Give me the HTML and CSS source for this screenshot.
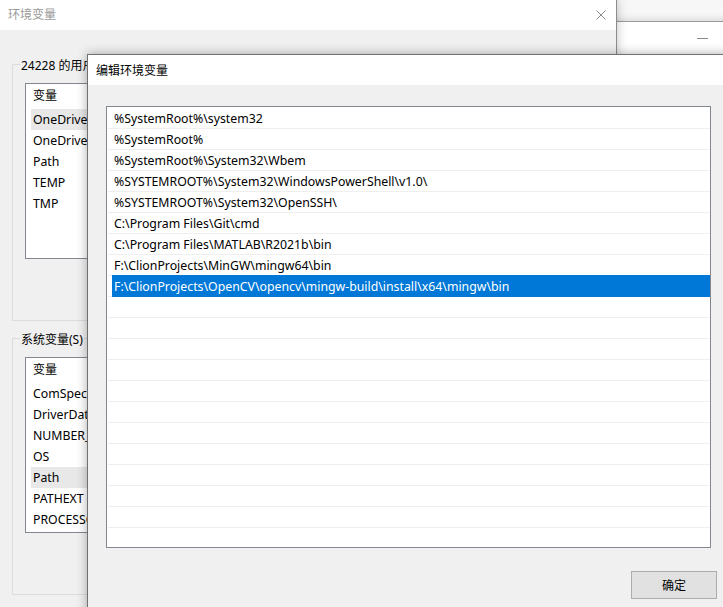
FILE: index.html
```html
<!DOCTYPE html>
<html lang="zh-CN">
<head>
    <meta charset="UTF-8">
    <title>编辑环境变量</title>
    <link rel="stylesheet" href="styles.css">
</head>
<body>
    <div class="desk">
        <!-- window far behind, only its title bar shows -->
        <div class="win far">
            <div class="titlebar">
                <span class="min"></span>
            </div>
        </div>

        <!-- 环境变量 -->
        <div class="win back">
            <div class="titlebar">
                <span class="title">环境变量</span>
                <svg class="close" width="10" height="10" viewBox="0 0 10 10">
                    <path d="M0.5 0.5 L9.5 9.5 M9.5 0.5 L0.5 9.5" stroke="#8a8a8a" stroke-width="1" fill="none"/>
                </svg>
            </div>
            <div class="win-body">
                <fieldset class="group">
                    <legend>24228 的用户变量(U)</legend>
                    <div class="varlist">
                        <div class="varhead">变量</div>
                        <div class="varrow sel">OneDrive</div>
                        <div class="varrow">OneDrive</div>
                        <div class="varrow">Path</div>
                        <div class="varrow">TEMP</div>
                        <div class="varrow">TMP</div>
                    </div>
                </fieldset>
                <fieldset class="group">
                    <legend>系统变量(S)</legend>
                    <div class="varlist">
                        <div class="varhead">变量</div>
                        <div class="varrow">ComSpec</div>
                        <div class="varrow">DriverData</div>
                        <div class="varrow">NUMBER_OF_PROCESSORS</div>
                        <div class="varrow">OS</div>
                        <div class="varrow sel">Path</div>
                        <div class="varrow">PATHEXT</div>
                        <div class="varrow">PROCESSOR_ARCHITECTURE</div>
                    </div>
                </fieldset>
            </div>
        </div>

        <!-- 编辑环境变量 -->
        <div class="win dialog">
            <div class="titlebar">
                <span class="title dark">编辑环境变量</span>
            </div>
            <div class="dialog-body">
                <div class="pathlist">
                    <div class="item"><span class="cell">%SystemRoot%\system32</span></div>
                    <div class="item"><span class="cell">%SystemRoot%</span></div>
                    <div class="item"><span class="cell">%SystemRoot%\System32\Wbem</span></div>
                    <div class="item"><span class="cell">%SYSTEMROOT%\System32\WindowsPowerShell\v1.0\</span></div>
                    <div class="item"><span class="cell">%SYSTEMROOT%\System32\OpenSSH\</span></div>
                    <div class="item"><span class="cell">C:\Program Files\Git\cmd</span></div>
                    <div class="item"><span class="cell">C:\Program Files\MATLAB\R2021b\bin</span></div>
                    <div class="item"><span class="cell">F:\ClionProjects\MinGW\mingw64\bin</span></div>
                    <div class="item selected"><span class="cell">F:\ClionProjects\OpenCV\opencv\mingw-build\install\x64\mingw\bin</span></div>
                    <div class="item"><span class="cell"></span></div>
                    <div class="item"><span class="cell"></span></div>
                    <div class="item"><span class="cell"></span></div>
                    <div class="item"><span class="cell"></span></div>
                    <div class="item"><span class="cell"></span></div>
                    <div class="item"><span class="cell"></span></div>
                    <div class="item"><span class="cell"></span></div>
                    <div class="item"><span class="cell"></span></div>
                    <div class="item"><span class="cell"></span></div>
                    <div class="item"><span class="cell"></span></div>
                    <div class="item"><span class="cell"></span></div>
                    <div class="item"><span class="cell"></span></div>
                </div>
                <div class="actions">
                    <button class="btn">确定</button>
                </div>
            </div>
        </div>
    </div>
</body>
</html>
```

FILE: styles.css
```css
html, body {
    margin: 0;
    padding: 0;
}
body {
    font-family: "Noto Sans", "Noto Sans CJK SC", sans-serif;
    font-size: 12px;
    color: #000;
    background: #f7f7f7;
}
.desk {
    position: relative;
    width: 723px;
    height: 607px;
    overflow: hidden;
}
.win {
    position: absolute;
    box-sizing: border-box;
    background: #f0f0f0;
}
.titlebar {
    height: 30px;
    background: #fff;
    display: flex;
    align-items: center;
    box-sizing: border-box;
}
.title {
    color: #9a9a9a;
    line-height: 16px;
}
.title.dark {
    color: #000;
    padding-top: 1px;
}

/* far window */
.far {
    left: 560px;
    top: 21px;
    width: 190px;
    height: 200px;
    border-top: 1px solid #9c9c9c;
    box-shadow: 0 0 9px rgba(0,0,0,0.18);
    z-index: 1;
}
.far .titlebar {
    height: 33px;
    justify-content: flex-end;
    padding-right: 42px;
}
.min {
    width: 11px;
    height: 1px;
    background: #8a8a8a;
}

/* 环境变量 window */
.back {
    left: -1px;
    top: -1px;
    width: 618px;
    height: 620px;
    border: 1px solid #8c8c8c;
    box-shadow: 0 0 10px rgba(0,0,0,0.25);
    z-index: 2;
}
.back .titlebar {
    padding: 0 0 0 8px;
    justify-content: space-between;
}
.back .close {
    margin-right: 10px;
}
.win-body {
    padding: 26px 0 0 12px;
}
.group {
    margin: 0 0 9px 0;
    padding: 0 20px 61px 12px;
    border: 1px solid #dcdcdc;
    width: 560px;
}
.group legend {
    margin-left: -5px;
    padding: 0 1px;
    line-height: 20px;
    height: 16px;
}
.varlist {
    margin-top: 11px;
    height: 176px;
    box-sizing: border-box;
    background: #fff;
    border: 1px solid #828790;
    overflow: hidden;
}
.varhead {
    height: 25px;
    line-height: 24px;
    padding-left: 7px;
}
.varrow {
    height: 21px;
    line-height: 21px;
    margin-left: 5px;
    padding-left: 2px;
    white-space: nowrap;
    font-size: 12.3px;
}
.varrow.sel {
    background: #e8e8e8;
}

/* 编辑环境变量 dialog */
.dialog {
    left: 87px;
    top: 54px;
    width: 650px;
    height: 600px;
    border-left: 1px solid #707070;
    border-top: 1px solid #707070;
    box-shadow: 0 0 10px rgba(0,0,0,0.32);
    z-index: 3;
}
.dialog .titlebar {
    padding-left: 8px;
}
.dialog-body {
    padding: 21px 0 0 18px;
}
.pathlist {
    width: 605px;
    height: 442px;
    box-sizing: border-box;
    background: #fff;
    border: 1px solid #828790;
    padding: 1px 0 0 1px;
    overflow: hidden;
}
.item {
    display: flex;
    height: 20px;
    border-bottom: 1px solid #efefef;
}
.cell {
    flex: 1;
    margin-left: 4px;
    padding-left: 2px;
    line-height: 22px;
    font-size: 12.3px;
    white-space: nowrap;
}
.item.selected .cell {
    background: #0078d7;
    color: #fff;
    box-shadow: 0 -1px 0 #0078d7, 0 1px 0 #0078d7;
}
.actions {
    width: 611px;
    display: flex;
    justify-content: flex-end;
    margin-top: 23px;
}
.btn {
    width: 86px;
    height: 28px;
    background: #e1e1e1;
    border: 1px solid #adadad;
    font-family: "Noto Sans", "Noto Sans CJK SC", sans-serif;
    font-size: 12px;
    color: #000;
    padding: 0;
}
```
